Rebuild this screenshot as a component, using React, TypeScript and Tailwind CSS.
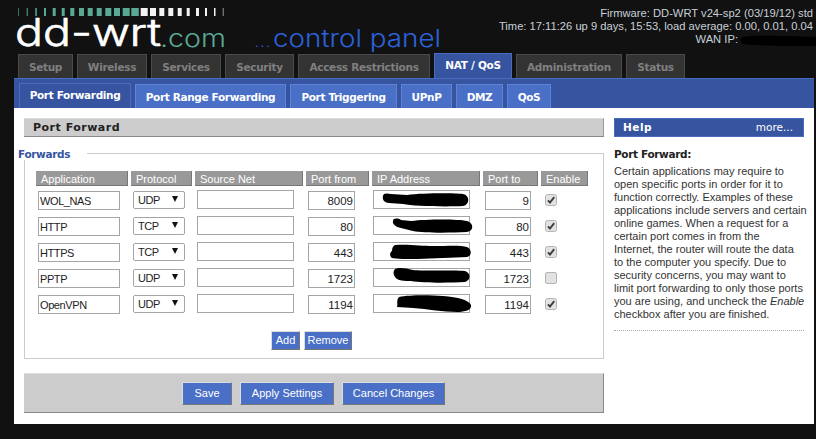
const ticks: [number, number][] = [
  [18, 1], [26.7, 1], [35.3, 1.5], [44, 2], [52.7, 3], [61.7, 3], [70.3, 4], [79, 5], [87.7, 5], [96.7, 5],
  [105.3, 6], [114, 6], [122.7, 7], [131.3, 7.5], [140.7, 7], [150, 6], [159.3, 5], [168.3, 5], [177.7, 4], [186.7, 3],
  [196, 3], [205, 2], [214, 1.5], [222.7, 1],
];

const topTabs = [
  { label: "Setup", w: "w-[55px]" },
  { label: "Wireless", w: "w-[70px]" },
  { label: "Services", w: "w-[70px]" },
  { label: "Security", w: "w-[69px]" },
  { label: "Access Restrictions", w: "w-[132px]" },
  { label: "NAT / QoS", w: "w-[78px]", active: true },
  { label: "Administration", w: "w-[106px]" },
  { label: "Status", w: "w-[59px]" },
];

const subTabs = [
  { label: "Port Forwarding", w: "w-[112px]", active: true },
  { label: "Port Range Forwarding", w: "w-[151px]" },
  { label: "Port Triggering", w: "w-[107px]" },
  { label: "UPnP", w: "w-[51px]" },
  { label: "DMZ", w: "w-[47px]" },
  { label: "QoS", w: "w-[44px]" },
];

const rows = [
  { app: "WOL_NAS", proto: "UDP", from: "8009", to: "9", on: true, blob: "M10 6C10 3 14 3 18 4L34 5C50 3 80 3 90 4C97 5 97 15 90 16C70 17 40 16 30 14L16 13C11 13 9 9 10 6Z" },
  { app: "HTTP", proto: "TCP", from: "80", to: "80", on: true, blob: "M20 5C20 2 25 2 28 4L38 5C55 3 85 3 94 5C101 7 101 15 94 16C75 17 50 17 40 15L28 12C23 11 19 8 20 5Z" },
  { app: "HTTPS", proto: "TCP", from: "443", to: "443", on: true, blob: "M22 3C35 2 50 4 60 4C75 4 88 3 94 5C99 7 99 14 94 15C80 16 60 16 45 17C35 17 22 17 19 16C16 14 17 10 19 9C19 6 20 4 22 3Z" },
  { app: "PPTP", proto: "UDP", from: "1723", to: "1723", on: false, blob: "M22 1C26 -1 32 0 40 2C50 3 80 2 92 3C98 5 98 12 92 14C75 15 50 15 38 13C32 13 24 13 22 9C20 6 20 3 22 1Z" },
  { app: "OpenVPN", proto: "UDP", from: "1194", to: "1194", on: true, blob: "M26 3C36 1 55 1 70 2C85 3 96 6 98 11C99 16 92 18 84 18C70 18 55 15 40 14L24 13C25 10 23 6 26 3Z" },
];

const headers = [
  { label: "Application", w: "w-[95px]" },
  { label: "Protocol", w: "w-[64px]" },
  { label: "Source Net", w: "w-[111px]" },
  { label: "Port from", w: "w-[66px]" },
  { label: "IP Address", w: "w-[111px]" },
  { label: "Port to", w: "w-[58px]" },
  { label: "Enable", w: "w-[50px]" },
];

const helpLines = [
  "Certain applications may require to",
  "open specific ports in order for it to",
  "function correctly. Examples of these",
  "applications include servers and certain",
  "online games. When a request for a",
  "certain port comes in from the",
  "Internet, the router will route the data",
  "to the computer you specify. Due to",
  "security concerns, you may want to",
  "limit port forwarding to only those ports",
];

const box = "h-[19px] border border-[#a5a5a5] bg-white leading-[17px] text-[#222] px-px outline-none";

function Logo() {
  return (
    <svg width="450" height="53" className="shrink-0 overflow-visible">
      {ticks.map(([x, w], i) => (
        <rect key={x} x={x} y="8" width={w} height="8" fill={i < 14 ? "#5aa994" : "#f2f2f2"} opacity={i === 0 || i === 23 ? 0.6 : 1} />
      ))}
      <text x="15" y="46" fontFamily="Inter, sans-serif" fontWeight="300" fontSize="38" fill="#fff" stroke="#fff" strokeWidth="0.7" textLength="146" lengthAdjust="spacingAndGlyphs">
        dd-wrt
      </text>
      <text x="160" y="47" fontFamily="Inter, sans-serif" fontWeight="300" fontSize="24" fill="#5aa994" textLength="66" lengthAdjust="spacingAndGlyphs">
        .com
      </text>
      <text x="255" y="47" fontFamily="Inter, sans-serif" fontWeight="400" fontSize="12" fill="#2b62dc" textLength="15" lengthAdjust="spacing">
        ...
      </text>
      <text x="273" y="47" fontFamily="Inter, sans-serif" fontWeight="300" fontSize="24" fill="#2b62dc" textLength="168" lengthAdjust="spacingAndGlyphs">
        control panel
      </text>
    </svg>
  );
}

function Check() {
  return (
    <svg width="12" height="12" viewBox="0 0 12 12">
      <rect x="0.5" y="0.5" width="11" height="11" rx="2" fill="#e2e2e2" stroke="#b4b4b4" />
      <path d="M3 6.3L5 8.6L9.2 3.2" fill="none" stroke="#3d3d3d" strokeWidth="1.9" />
    </svg>
  );
}

function Button({ label, w, h }: { label: string; w: string; h: string }) {
  return (
    <button
      type="button"
      className={`${w} ${h} bg-[#4a6fc7] border border-t-[#ddd] border-l-[#ddd] border-r-[#777] border-b-[#777] text-[11px] text-white`}
    >
      {label}
    </button>
  );
}

export default function App() {
  return (
    <div className="w-[816px] h-[439px] overflow-hidden bg-[#111111] font-['Liberation_Sans',sans-serif]">
      <div className="flex justify-between h-[53px]">
        <Logo />
        <div className="pt-[7px] pr-[3px] text-right text-[11.2px] leading-[13px] text-[#c8d0d8] whitespace-nowrap">
          <div>Firmware: DD-WRT v24-sp2 (03/19/12) std</div>
          <div>Time: 17:11:26 up 9 days, 15:53, load average: 0.00, 0.01, 0.04</div>
          <div className="relative pr-[75px]">
            WAN IP:
            <svg width="76" height="13" viewBox="0 0 76 13" className="absolute right-[-3px] top-0">
              <path d="M2 4C15 2 40 3 76 4L76 13C50 13 15 13 3 11C0 9 0 6 2 4Z" fill="#000" />
            </svg>
          </div>
        </div>
      </div>

      <div className="flex items-end gap-1 h-[25px] pl-[18px] font-['DejaVu_Sans',sans-serif] text-[10.5px] tracking-[-0.3px] font-bold">
        {topTabs.map((t) =>
          t.active ? (
            <div key={t.label} className={`${t.w} h-[25px] bg-[#36549f] border-t border-x border-[#4a6cc0] text-white text-center leading-[23px]`}>
              {t.label}
            </div>
          ) : (
            <div key={t.label} className={`${t.w} h-[24px] bg-[#333333] border-t border-x border-[#4a4a4a] text-[#808080] text-center leading-[24px]`}>
              {t.label}
            </div>
          ),
        )}
      </div>

      <div className="ml-[14px] mr-[2px] h-[30px] bg-[#36549f] border-t border-[#4a6cc0] flex items-end gap-1 pl-[5px] font-['DejaVu_Sans',sans-serif] text-[10.5px] tracking-[-0.35px] font-bold text-white">
        {subTabs.map((t) =>
          t.active ? (
            <div key={t.label} className={`${t.w} h-[25px] bg-[#36549f] border-t border-x border-[#4a6cc0] text-center leading-[23px]`}>
              {t.label}
            </div>
          ) : (
            <div key={t.label} className={`${t.w} h-[24px] bg-[#4a6fc7] border-t border-x border-[#5f83d6] text-center leading-[25px]`}>
              {t.label}
            </div>
          ),
        )}
      </div>

      <div className="ml-[14px] mr-[2px] h-[316px] bg-white flex gap-[10px] pl-[10px] pt-[10px]">
        <div className="w-[580px]">
          <div className="h-[19px] bg-[#cccccc] border-t border-[#dddddd] border-b border-b-[#888888] border-r border-r-[#999999] pl-[9px] font-['DejaVu_Sans',sans-serif] text-[11px] font-bold tracking-[0.5px] leading-[17px] text-[#222]">
            Port Forward
          </div>

          <fieldset className="mt-[10px] h-[212px] border border-[#cccccc] pl-[11px]">
            <legend className="-ml-[18px] pr-[17px] h-[13px] font-['DejaVu_Sans',sans-serif] text-[10.5px] tracking-[-0.35px] font-bold leading-[15px] text-[#36549f]">
              Forwards
            </legend>
            <div className="flex mt-[11px]">
              {headers.map((h) => (
                <div key={h.label} className={`${h.w} pr-[3px]`}>
                  <div className="h-[15px] bg-[#999999] border-r border-b border-[#777777] pl-[5px] text-[11px] leading-[16px] text-white">
                    {h.label}
                  </div>
                </div>
              ))}
            </div>
            <div className="mt-[4px] flex flex-col gap-[7px]">
              {rows.map((r) => (
                <div key={r.app} className="flex items-center h-[19px]">
                  <div className="w-[95px] pl-[2px]">
                    <input readOnly value={r.app} className={`${box} w-[82px] text-[11px] tracking-[-0.4px]`} />
                  </div>
                  <div className="w-[64px] pl-[2px]">
                    <div className="relative w-[52px] h-[18px] border border-[#a5a5a5] rounded-[2px] bg-white pl-[4px] text-[11px] tracking-[-0.4px] leading-[16px] text-[#222]">
                      {r.proto}
                      <svg width="6" height="6" viewBox="0 0 6 6" className="absolute right-[6px] top-[4px]">
                        <path d="M0 0H6L3 6Z" fill="#111" />
                      </svg>
                    </div>
                  </div>
                  <div className="w-[111px] pl-[2px]">
                    <input readOnly value="" className={`${box} w-[97px]`} />
                  </div>
                  <div className="w-[66px] pl-[2px]">
                    <input readOnly value={r.from} className={`${box} w-[47px] text-right text-[11.5px]`} />
                  </div>
                  <div className="w-[111px] pl-px">
                    <div className="relative w-[97px] h-[19px] border border-[#a5a5a5] bg-white">
                      <svg width="97" height="19" viewBox="0 0 97 19" className="absolute -left-px -top-px overflow-visible">
                        <path d={r.blob} fill="#000" />
                      </svg>
                    </div>
                  </div>
                  <div className="w-[58px] pl-[2px]">
                    <input readOnly value={r.to} className={`${box} w-[46px] text-right text-[11.5px]`} />
                  </div>
                  <div className="w-[50px] pl-[4px]">
                    {r.on ? (
                      <Check />
                    ) : (
                      <div className="w-[12px] h-[12px] rounded-[2px] border border-[#b4b4b4] bg-[#e2e2e2]" />
                    )}
                  </div>
                </div>
              ))}
            </div>
            <div className="mt-[18px] pl-[235px] flex gap-1">
              <Button label="Add" w="w-[29px]" h="h-[19px]" />
              <Button label="Remove" w="w-[48px]" h="h-[19px]" />
            </div>
          </fieldset>

          <div className="mt-[14px] h-[40px] bg-[#cccccc] border-t border-[#dddddd] border-r border-b border-r-[#888888] border-b-[#888888] flex gap-[8px] pl-[158px] pt-[8px]">
            <Button label="Save" w="w-[50px]" h="h-[23px]" />
            <Button label="Apply Settings" w="w-[94px]" h="h-[23px]" />
            <Button label="Cancel Changes" w="w-[103px]" h="h-[23px]" />
          </div>
        </div>

        <div className="w-[190px]">
          <div className="h-[19px] bg-[#36549f] border border-[#4a6cc0] flex justify-between pl-[8px] pr-[10px] font-['DejaVu_Sans',sans-serif] text-[10.5px] leading-[17px] text-white">
            <span className="font-bold tracking-[0.5px]">Help</span>
            <span>more...</span>
          </div>
          <div className="mt-[11px] font-['DejaVu_Sans',sans-serif] text-[10.5px] tracking-[-0.35px] font-bold leading-[13px] text-[#222]">
            Port Forward:
          </div>
          <div className="mt-[4px] text-[11px] leading-[13px] text-[#333] whitespace-nowrap">
            {helpLines.map((line) => (
              <div key={line}>{line}</div>
            ))}
            <div>
              you are using, and uncheck the <i>Enable</i>
            </div>
            <div>checkbox after you are finished.</div>
          </div>
          <div className="mt-[9px] border-b border-dotted border-[#aaaaaa]" />
        </div>
      </div>
    </div>
  );
}
